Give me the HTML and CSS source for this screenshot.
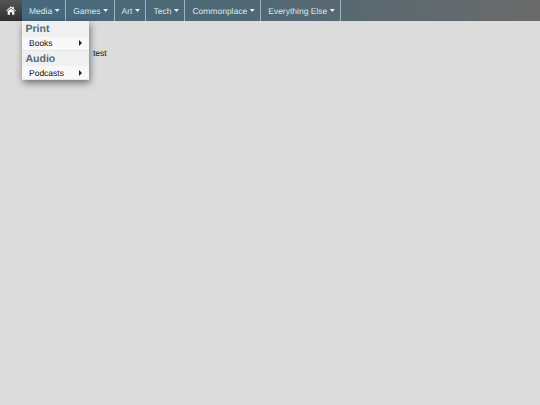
FILE: index.html
```html
<!DOCTYPE html>
<html lang="en">

<head>
    <meta charset="UTF-8">
    <title>Document</title>
    <link rel="stylesheet" href="styles.css">
</head>

<body>
    <ul class="nav">
        <li class="home">
            <svg viewBox="0 0 24 20" width="10" height="9">
                <path fill="#f4f4f4" d="M12 0 L16 3.5 V1 H19 V6.2 L24 10.5 L22.5 12 L12 3.2 L1.5 12 L0 10.5 Z M4 12 L12 5.2 L20 12 V20 H14.5 V14 H9.5 V20 H4 Z" />
            </svg>
        </li>
        <li class="item active">
            <span>Media</span><span class="caret"></span>
            <ul class="dropdown">
                <li class="group">Print</li>
                <li class="row"><span>Books</span><span class="arrow"></span></li>
                <li class="group">Audio</li>
                <li class="row"><span>Podcasts</span><span class="arrow"></span></li>
            </ul>
        </li>
        <li class="item"><span>Games</span><span class="caret"></span></li>
        <li class="item"><span>Art</span><span class="caret"></span></li>
        <li class="item"><span>Tech</span><span class="caret"></span></li>
        <li class="item"><span>Commonplace</span><span class="caret"></span></li>
        <li class="item"><span>Everything Else</span><span class="caret"></span></li>
    </ul>
    <div class="content">test</div>
</body>

</html>
```

FILE: styles.css
```css
* {
    margin: 0;
    padding: 0;
    box-sizing: border-box;
}

body {
    min-height: 100vh;
    background-color: #dcdcdc;
    font-family: "Liberation Sans", Arial, sans-serif;
    font-size: 8.5px;
    color: #111;
    text-rendering: geometricPrecision;
}

.nav {
    display: flex;
    height: 21px;
    list-style: none;
    background: linear-gradient(to right, #456a7f 0%, #4f6874 45%, #6a6a6a 100%);
}

.home {
    display: flex;
    align-items: center;
    justify-content: center;
    width: 22px;
    background: linear-gradient(to bottom, #555, #2f2f2f);
}

.item {
    position: relative;
    display: flex;
    align-items: center;
    gap: 2.5px;
    padding: 0 5.5px 0 7px;
    color: #dfe6ea;
    white-space: nowrap;
    border-right: 1px solid #a3b3bc;
}

.item.active {
    background-color: #46697d;
}

.caret {
    flex: none;
    width: 5px;
    height: 3px;
    background-color: #eee;
    clip-path: polygon(0 0, 100% 0, 50% 100%);
}

.dropdown {
    position: absolute;
    top: 21px;
    left: 0;
    width: 67px;
    list-style: none;
    background-color: #f0f0f0;
    color: #111;
    box-shadow: 1px 3px 7px rgba(0, 0, 0, .5);
}

.group {
    height: 15.5px;
    padding-left: 3.5px;
    font-size: 10.5px;
    font-weight: bold;
    line-height: 17px;
    color: #4f6a80;
}

.row {
    display: flex;
    align-items: center;
    justify-content: space-between;
    height: 14px;
    padding: 0 7px;
    background-color: #f8f8f8;
    border-bottom: 1px solid #e6e6e6;
}

.arrow {
    width: 0;
    height: 0;
    border-left: 3px solid #222;
    border-top: 3px solid transparent;
    border-bottom: 3px solid transparent;
}

.content {
    padding: 27px 0 0 93px;
}
```
